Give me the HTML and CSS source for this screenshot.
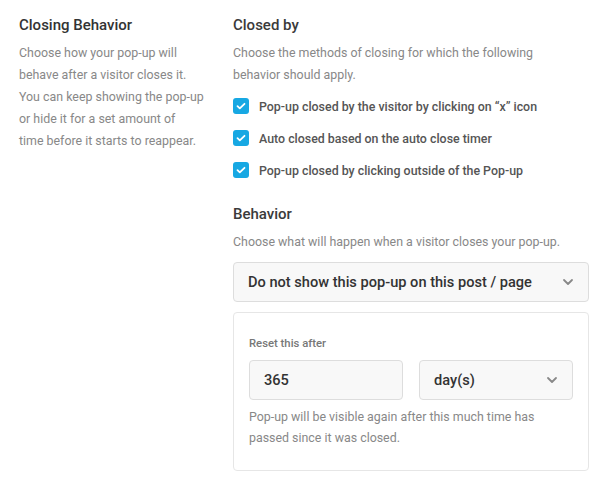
FILE: index.html
```html
<!DOCTYPE html>
<html>
<head>
<meta charset="utf-8">
<link rel="stylesheet" href="styles.css">
</head>
<body>
<div class="row">
  <div class="side">
    <h2 class="title">Closing Behavior</h2>
    <p class="desc">Choose how your pop-up will behave after a visitor closes it. You can keep showing the pop-up or hide it for a set amount of<br>time before it starts to reappear.</p>
  </div>
  <div class="main">
    <h3 class="sub">Closed by</h3>
    <p class="desc desc-main">Choose the methods of closing for which the following behavior should apply.</p>
    <ul class="checks">
      <li class="check"><span class="box"><svg viewBox="0 0 16 16" width="16" height="16"><path d="M4.5 8.2l2.3 2.2 4.7-4.6" fill="none" stroke="#fff" stroke-width="1.8" stroke-linecap="round" stroke-linejoin="round"/></svg></span>Pop-up closed by the visitor by clicking on “x” icon</li>
      <li class="check"><span class="box"><svg viewBox="0 0 16 16" width="16" height="16"><path d="M4.5 8.2l2.3 2.2 4.7-4.6" fill="none" stroke="#fff" stroke-width="1.8" stroke-linecap="round" stroke-linejoin="round"/></svg></span>Auto closed based on the auto close timer</li>
      <li class="check"><span class="box"><svg viewBox="0 0 16 16" width="16" height="16"><path d="M4.5 8.2l2.3 2.2 4.7-4.6" fill="none" stroke="#fff" stroke-width="1.8" stroke-linecap="round" stroke-linejoin="round"/></svg></span>Pop-up closed by clicking outside of the Pop-up</li>
    </ul>
    <h3 class="sub sub-2">Behavior</h3>
    <p class="desc desc-main">Choose what will happen when a visitor closes your pop-up.</p>
    <div class="select select-big">
      <span>Do not show this pop-up on this post / page</span>
      <svg class="chev" viewBox="0 0 12 8" width="12" height="8"><path d="M2 2l4 4 4-4" fill="none" stroke="#888" stroke-width="1.8" stroke-linecap="round" stroke-linejoin="round"/></svg>
    </div>
    <div class="panel">
      <div class="label">Reset this after</div>
      <div class="fields">
        <div class="input">365</div>
        <div class="select select-small">
          <span>day(s)</span>
          <svg class="chev" viewBox="0 0 12 8" width="12" height="8"><path d="M2 2l4 4 4-4" fill="none" stroke="#888" stroke-width="1.8" stroke-linecap="round" stroke-linejoin="round"/></svg>
        </div>
      </div>
      <p class="desc hint">Pop-up will be visible again after this much time has passed since it was closed.</p>
    </div>
  </div>
</div>
</body>
</html>
```

FILE: styles.css
```css
* { box-sizing: border-box; }
html, body { margin: 0; padding: 0; background: #fff; }
body { font-family: Roboto, "Liberation Sans", sans-serif; color: #333; }
.row { display: flex; padding: 14px 0 0 19px; }
.side { width: 214px; flex: none; padding-right: 26px; }
.main { width: 356px; flex: none; }
.title { margin: 0 0 6px; font-size: 15px; font-weight: 500; line-height: 22px; color: #333; }
.sub { margin: 0 0 6px; font-size: 15px; font-weight: 500; line-height: 22px; color: #3a3a3a; }
.sub-2 { margin-top: 17px; }
.desc { margin: 0; font-size: 12.4px; line-height: 22px; color: #888; }
.desc-main { max-width: 340px; }
.checks { list-style: none; margin: 4px 0 0; padding: 0; }
.check { display: flex; align-items: center; height: 32px; font-size: 12.4px; font-weight: 500; color: #555; }
.box { width: 16px; height: 16px; border-radius: 3px; background: #17a8e3; margin-right: 10px; display: flex; flex: none; }
.select { display: flex; align-items: center; justify-content: space-between; background: #f8f8f8; border: 1px solid #ddd; border-radius: 4px; height: 40px; color: #333; font-weight: 500; }
.select-big { margin-top: 9px; padding: 0 14px; font-size: 14.6px; }
.chev { flex: none; }
.panel { margin-top: 10px; border: 1px solid #e6e6e6; border-radius: 4px; padding: 23px 15px 22px; }
.label { font-size: 11.3px; line-height: 16px; color: #777; font-weight: 500; }
.fields { display: flex; gap: 16px; margin-top: 8px; }
.input, .select-small { flex: 1; height: 40px; }
.input { display: flex; align-items: center; background: #f8f8f8; border: 1px solid #ddd; border-radius: 4px; padding: 0 14px; font-size: 14.6px; font-weight: 500; color: #333; }
.select-small { padding: 0 14px; font-size: 14.6px; }
.hint { margin-top: 6px; line-height: 21px; }
```
